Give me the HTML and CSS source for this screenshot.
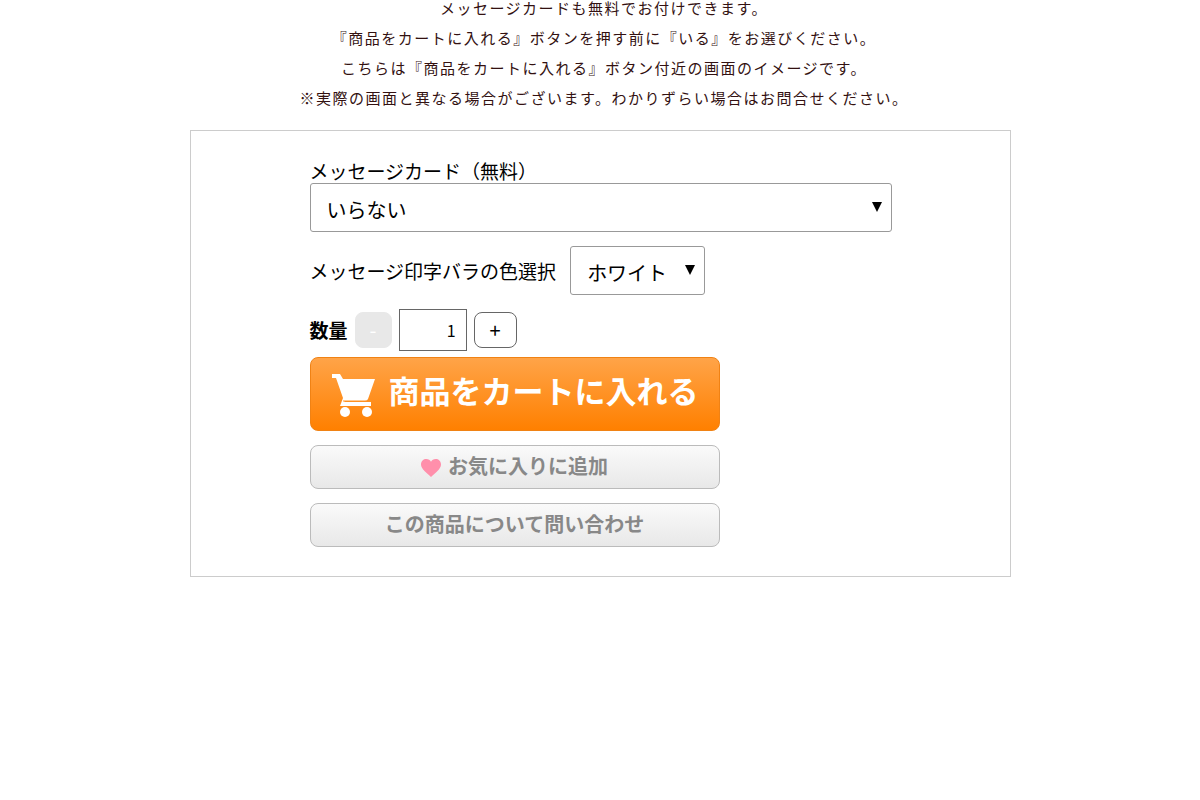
FILE: index.html
```
<!DOCTYPE html>
<html lang="ja">
<head>
    <meta charset="UTF-8">
    <meta name="viewport" content="width=device-width, initial-scale=1.0">
    <title>メッセージカードについて</title>
    <link rel="stylesheet" href="styles.css">
</head>
<body>
    <main>
        <p class="intro">
            メッセージカードも無料でお付けできます。<br>
            『商品をカートに入れる』ボタンを押す前に『いる』をお選びください。<br>
            こちらは『商品をカートに入れる』ボタン付近の画面のイメージです。<br>
            ※実際の画面と異なる場合がございます。わかりずらい場合はお問合せください。
        </p>
        <form class="order">
            <label for="card">メッセージカード（無料）</label>
            <select id="card" class="select-wide">
                <option>いらない</option>
                <option>いる</option>
            </select>
            <div class="color-row">
                <label for="color">メッセージ印字バラの色選択</label>
                <select id="color">
                    <option>ホワイト</option>
                </select>
            </div>
            <div class="quantity-row">
                <label for="quantity">数量</label>
                <button type="button" class="step minus" disabled>-</button>
                <input type="text" id="quantity" value="1" inputmode="numeric">
                <button type="button" class="step plus">+</button>
            </div>
            <div class="buttons">
                <button type="submit" class="cart">
                    <svg class="cart-icon" viewBox="0 0 44 44" aria-hidden="true">
                        <path d="M1 1h8l3 5h32l-7 20q-1 2-3 2H14l-1 1h27v4H9l3-8L5 5H1z"/>
                        <path d="M12 28h28" stroke="#ff9426" stroke-width="1"/>
                        <circle cx="14" cy="39" r="5"/>
                        <circle cx="36" cy="39" r="5"/>
                    </svg>
                    <span>商品をカートに入れる</span>
                </button>
                <button type="button" class="sub">
                    <svg class="heart-icon" viewBox="0 0 20 18" aria-hidden="true">
                        <path d="M10 18C6 14 0 10 0 5.500C0 2 2.500 0 5.300 0C7.500 0 9 1 10 2.800C11 1 12.500 0 14.700 0C17.500 0 20 2 20 5.500C20 10 14 14 10 18z"/>
                    </svg>
                    <span>お気に入りに追加</span>
                </button>
                <button type="button" class="sub">この商品について問い合わせ</button>
            </div>
        </form>
    </main>
</body>
</html>
```
FILE: styles.css
```
* {
    box-sizing: border-box;
}
body {
    font-family: "Noto Sans CJK JP", sans-serif;
    margin: 0;
    background: #fff;
    color: #000;
}
main {
    max-width: 821px;
    margin: 0 auto;
}
.intro {
    margin: -7px 0 17px;
    padding-left: 8px;
    font-size: 15px;
    line-height: 30px;
    letter-spacing: 0.1em;
    text-align: center;
    color: #311;
}
.order {
    padding: 28px 118px 29px 119px;
    border: 1px solid #ccc;
    font-size: 19px;
    line-height: 24px;
}
.order label {
    display: block;
}
select,
input,
button {
    font-family: inherit;
    color: inherit;
}
select {
    height: 49px;
    padding: 4px 37px 0 16px;
    border: 1px solid #999;
    border-radius: 3px;
    font-size: 20px;
    appearance: none;
    background: #fff url("data:image/svg+xml,%3Csvg xmlns='http://www.w3.org/2000/svg' width='10' height='10'%3E%3Cpath d='M0 0h10L5 10z'/%3E%3C/svg%3E") no-repeat right 9px top 18px;
}
.select-wide {
    display: block;
    width: 100%;
}
.color-row {
    display: flex;
    align-items: center;
    gap: 14px;
    margin-top: 14px;
}
.quantity-row {
    display: flex;
    align-items: center;
    gap: 7px;
    margin-top: 14px;
}
.quantity-row label {
    font-weight: bold;
}
.quantity-row input {
    width: 68px;
    height: 42px;
    padding: 0 10px;
    border: 1px solid #666;
    font-size: 16px;
    text-align: right;
}
.step {
    height: 36px;
    padding: 0;
    border: 1px solid #666;
    border-radius: 8px;
    background: #fff;
    font-size: 20px;
    line-height: 28px;
}
.minus {
    width: 37px;
    border-color: #e8e8e8;
    background: #e8e8e8;
    color: #fff;
}
.plus {
    width: 43px;
}
.buttons {
    display: flex;
    flex-direction: column;
    gap: 14px;
    max-width: 410px;
    margin-top: 6px;
}
.cart,
.sub {
    display: flex;
    align-items: center;
    justify-content: center;
    border-radius: 8px;
    font-weight: bold;
    cursor: pointer;
}
.cart {
    height: 74px;
    gap: 14px;
    padding: 0 0 10px;
    border: 1px solid #f08214;
    background: linear-gradient(#ffa448, #ff8000);
    color: #fff;
    font-size: 31px;
}
.cart-icon {
    width: 44px;
    height: 44px;
    margin-top: 12px;
    fill: #fff;
}
.sub {
    height: 44px;
    gap: 7px;
    padding: 0 0 4px;
    border: 1px solid #bbb;
    background: linear-gradient(#fafafa, #e8e8e8);
    color: #888;
    font-size: 20px;
}
.heart-icon {
    width: 20px;
    height: 18px;
    margin-top: 5px;
    fill: #ff8fab;
}
```
